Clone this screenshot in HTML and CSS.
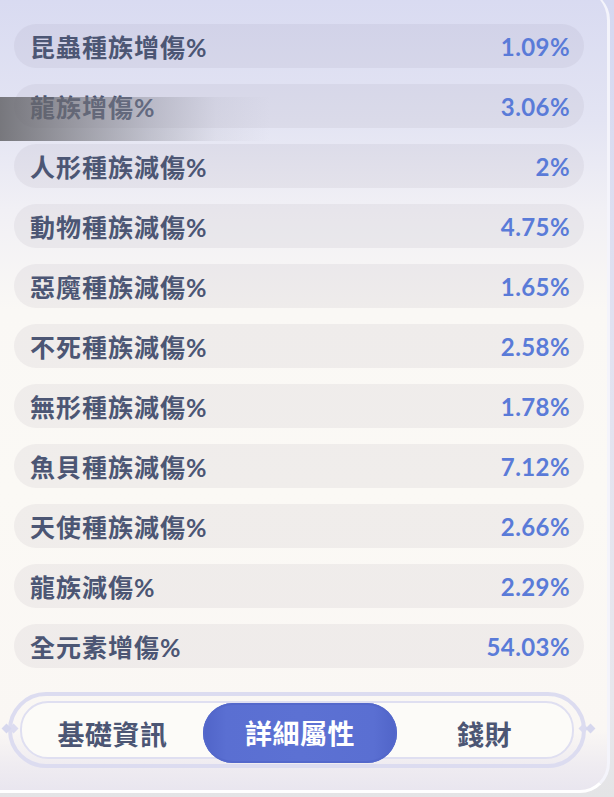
FILE: index.html
```html
<!DOCTYPE html>
<html lang="zh-Hant">
<head>
<meta charset="utf-8">
<link rel="stylesheet" href="styles.css">
</head>
<body>
<div class="panel">
  <div class="list">
    <div class="row"><span class="label">昆蟲種族增傷%</span><span class="value">1.09%</span></div>
    <div class="row"><span class="label">龍族增傷%</span><span class="value">3.06%</span></div>
    <div class="row"><span class="label">人形種族減傷%</span><span class="value">2%</span></div>
    <div class="row"><span class="label">動物種族減傷%</span><span class="value">4.75%</span></div>
    <div class="row"><span class="label">惡魔種族減傷%</span><span class="value">1.65%</span></div>
    <div class="row"><span class="label">不死種族減傷%</span><span class="value">2.58%</span></div>
    <div class="row"><span class="label">無形種族減傷%</span><span class="value">1.78%</span></div>
    <div class="row"><span class="label">魚貝種族減傷%</span><span class="value">7.12%</span></div>
    <div class="row"><span class="label">天使種族減傷%</span><span class="value">2.66%</span></div>
    <div class="row"><span class="label">龍族減傷%</span><span class="value">2.29%</span></div>
    <div class="row"><span class="label">全元素增傷%</span><span class="value">54.03%</span></div>
  </div>
  <div class="tabs-frame">
    <div class="tabs-ring">
      <div class="tab">基礎資訊</div>
      <div class="tab active">詳細屬性</div>
      <div class="tab">錢財</div>
    </div>
  </div>
</div>
<div class="shade"></div>
</body>
</html>
```
FILE: styles.css
```css
html, body {
  margin: 0;
  padding: 0;
}
body {
  width: 614px;
  height: 797px;
  overflow: hidden;
  position: relative;
  background: linear-gradient(to bottom, #d5d8f1 0, #e2e2f0 350px, #e8e7ec 700px, #e4e4e6 100%);
  font-family: "Noto Sans CJK TC", "Noto Sans", sans-serif;
}
.panel {
  box-sizing: border-box;
  width: 610px;
  height: 803px;
  margin-top: -10px;
  padding: 34px 0 0 14px;
  border-right: 3px solid #f4f4fb;
  border-bottom: 3px solid #ffffff;
  border-radius: 0 30px 30px 0;
  background: linear-gradient(to bottom,
    #d8daf1 0,
    #e3e4f3 130px,
    #f1f0f5 220px,
    #faf8f5 320px,
    #fbf9f5 500px,
    #faf7f4 740px,
    #efecf1 775px,
    #e9e6ef 100%);
}
.list {
  display: flex;
  flex-direction: column;
  gap: 16px;
  width: 570px;
}
.row {
  height: 44px;
  border-radius: 22px;
  background: rgba(105, 100, 125, 0.075);
  display: flex;
  align-items: center;
  justify-content: space-between;
  padding: 0 14px 0 16px;
}
.label {
  font-family: Lato, "Noto Sans CJK TC", "Noto Sans", sans-serif;
  font-weight: 700;
  font-size: 25px;
  color: #4c5674;
  letter-spacing: 1px;
}
.value {
  font-family: Lato, "Noto Sans", sans-serif;
  font-weight: 700;
  font-size: 24px;
  color: #5a7bd8;
  letter-spacing: 0.4px;
}
.tabs-frame {
  position: relative;
  box-sizing: border-box;
  width: 578px;
  height: 76px;
  margin: 24px 0 0 -6px;
  padding: 5px 8px;
  border: 4px solid #dcdcf0;
  border-radius: 38px;
}
.tabs-frame::before,
.tabs-frame::after {
  content: "";
  position: absolute;
  top: 29px;
  width: 7px;
  height: 7px;
  background: #d6d7ee;
  transform: rotate(45deg);
}
.tabs-frame::before {
  left: -9px;
  box-shadow: 5px -5px 0 0 #dcdcf0;
}
.tabs-frame::after {
  right: -12px;
  box-shadow: -5px 5px 0 0 #dcdcf0;
}
.tabs-ring {
  box-sizing: border-box;
  height: 100%;
  border: 2px solid #dfdff1;
  border-radius: 28px;
  background: #fcfbf8;
  display: grid;
  grid-template-columns: 181px 194px 1fr;
  align-items: center;
}
.tab {
  text-align: center;
  font-family: "Noto Sans CJK TC", "Noto Sans", sans-serif;
  font-weight: 700;
  font-size: 27px;
  color: #4c5674;
  letter-spacing: 0.5px;
}
.tab.active {
  height: 60px;
  line-height: 60px;
  border-radius: 30px;
  color: #ffffff;
  background: linear-gradient(to right, #5064c8 0, #5a6fd2 12%, #5c71d3 50%, #5a6fd2 88%, #5064c8 100%);
  box-shadow: inset 0 0 0 2px #5468cb;
}
.shade {
  position: absolute;
  left: 0;
  top: 97px;
  width: 270px;
  height: 44px;
  background: linear-gradient(to right, rgba(100, 100, 104, 0.85) 0, rgba(112, 112, 118, 0.65) 25%, rgba(135, 136, 146, 0.4) 55%, rgba(160, 160, 172, 0.12) 80%, rgba(170, 170, 180, 0) 100%);
}
```
